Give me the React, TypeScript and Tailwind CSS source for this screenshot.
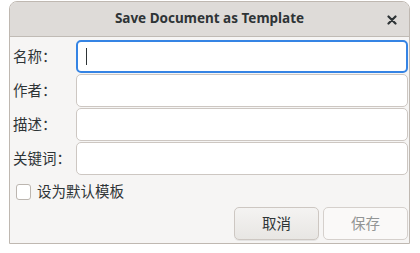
import React, { useState } from 'react';

const fontStack = "font-['Noto_Sans','Noto_Sans_CJK_SC',sans-serif]";

const fields = [
  { key: 'name', label: '名称：' },
  { key: 'author', label: '作者：' },
  { key: 'desc', label: '描述：' },
  { key: 'keywords', label: '关键词：' },
];

export default function App() {
  const [values, setValues] = useState<Record<string, string>>({});
  const [isDefault, setIsDefault] = useState(false);

  return (
    <div className={`w-[420px] h-[253px] bg-white pt-px pl-[9px] text-[#2e3436] ${fontStack}`}>
      <div className="w-[401px] h-[243px] flex flex-col border border-[#bfb8b1] rounded-t-[8px] bg-[#f6f5f4] overflow-hidden">
        {/* title bar */}
        <div className="h-[35px] shrink-0 relative flex items-center justify-center bg-[#dedbd8] border-b border-[#c0bbb5]">
          <span className="text-[13.5px] font-bold text-[#2e3436] leading-none">Save Document as Template</span>
          <button className="absolute right-[9px] top-[10px] w-[16px] h-[16px] flex items-center justify-center">
            <svg width="10" height="10" viewBox="0 0 10 10">
              <path d="M1.5 1.5 L8.5 8.5 M8.5 1.5 L1.5 8.5" stroke="#2e3436" strokeWidth="2.2" strokeLinecap="round" />
            </svg>
          </button>
        </div>

        {/* fields */}
        <div className="flex flex-col gap-px pt-[3px] pl-[3px] pr-[1px]">
          {fields.map((f, i) => (
            <div key={f.key} className="flex items-center h-[33px]">
              <label className="w-[63px] shrink-0 text-[14.5px] leading-none">{f.label}</label>
              <div
                className={`flex-1 h-[33px] rounded-[5px] bg-white flex items-center px-[8px] ${
                  i === 0 ? 'border-2 border-[#3584e4]' : 'border border-[#cdc7c2]'
                }`}
              >
                <input
                  value={values[f.key] ?? ''}
                  onChange={e => setValues({ ...values, [f.key]: e.target.value })}
                  className="w-full bg-transparent outline-none text-[14px]"
                />
                {i === 0 && <span className="absolute w-px h-[17px] bg-[#2e3436]" />}
              </div>
            </div>
          ))}
        </div>

        {/* checkbox */}
        <label className="flex items-center gap-[6px] pl-[6px] mt-[8px] h-[17px] text-[14.5px] leading-none">
          <span
            onClick={() => setIsDefault(!isDefault)}
            className="w-[15px] h-[16px] rounded-[3px] border border-[#bcb6b0] bg-white"
          />
          <span>设为默认模板</span>
        </label>

        {/* buttons */}
        <div className="flex justify-end gap-[4px] pr-[1px] mt-[7px]">
          <button className="w-[85px] h-[33px] rounded-[5px] border border-[#cdc7c2] bg-gradient-to-b from-[#f4f3f2] to-[#e8e6e3] text-[14.5px] text-[#2e3436] shadow-[0_1px_0_rgba(0,0,0,0.07)]">
            取消
          </button>
          <button disabled className="w-[85px] h-[33px] rounded-[5px] border border-[#d5d0cc] bg-[#faf9f8] text-[14.5px] text-[#929595]">
            保存
          </button>
        </div>
      </div>
    </div>
  );
}
